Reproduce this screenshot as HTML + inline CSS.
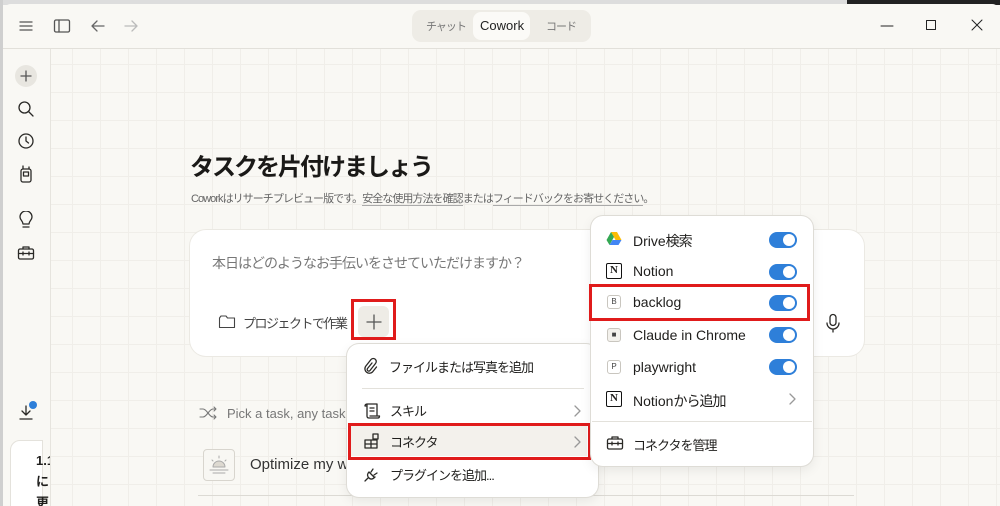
<!DOCTYPE html>
<html><head><meta charset="utf-8"><style>
*{margin:0;padding:0;box-sizing:border-box}
html,body{width:1000px;height:506px;overflow:hidden}
body{position:relative;background:#f9f8f4;font-family:"Liberation Sans","Noto Sans CJK JP",sans-serif;color:#1f1e1c}
.a{position:absolute}
.grid{left:51px;top:49px;right:0;bottom:0;background-image:linear-gradient(#f0eee9 1px,transparent 1px),linear-gradient(90deg,#f0eee9 1px,transparent 1px);background-size:28px 28px;background-position:-7px 15px}
.t{white-space:nowrap}
.j{letter-spacing:-1px}
.tog{width:28px;height:16px;border-radius:8px;background:#2e7fd9}
.tog:after{content:"";position:absolute;right:2px;top:2px;width:12px;height:12px;border-radius:6px;background:#fff}
.red{border:3px solid #e01b1b}
svg{position:absolute;fill:none;stroke:#2a2926;stroke-width:1.3;stroke-linecap:round;stroke-linejoin:round}
.bx{width:14px;height:14px;border:1px solid #c9c6bf;border-radius:3px;font-size:8px;text-align:center;line-height:12px;color:#444;background:#fff}
</style></head><body>
<div class="a" style="left:0;top:0;width:1000px;height:5px;background:#ddd"></div>
<div class="a" style="left:847px;top:0;width:153px;height:5px;background:#222"></div>
<div class="a" style="left:0;top:0;width:3px;height:506px;background:#cfcfcf"></div>
<div class="a" style="left:3px;top:4px;right:0;bottom:0;background:#f9f8f4;border-radius:8px 8px 0 0"></div>
<div class="a" style="left:3px;top:48px;right:0;height:1px;background:#e2e0da"></div>
<div class="a" style="left:50px;top:49px;width:1px;bottom:0;background:#e6e4de"></div>
<div class="a grid"></div>

<svg style="left:18px;top:18px" width="16" height="16"><path d="M2 4h12M2 8h12M2 12h12" stroke="#555"/></svg>
<svg style="left:53px;top:18px" width="18" height="16"><rect x="1.5" y="2" width="15" height="12" rx="1.5" stroke="#555"/><path d="M6 2v12" stroke="#555"/></svg>
<svg style="left:89px;top:18px" width="18" height="16"><path d="M15 8H3M8 3L3 8l5 5" stroke="#666"/></svg>
<svg style="left:122px;top:18px" width="18" height="16"><path d="M3 8h12M10 3l5 5-5 5" stroke="#bbb"/></svg>
<div class="a" style="left:412px;top:10px;width:179px;height:32px;background:#eeece6;border-radius:9px"></div>
<div class="a t j" style="left:426px;top:18px;font-size:11px;color:#777">チャット</div>
<div class="a" style="left:473px;top:12px;width:57px;height:28px;background:#fbfaf7;border-radius:8px"></div>
<div class="a t" style="left:480px;top:18px;font-size:13px;color:#222">Cowork</div>
<div class="a t j" style="left:546px;top:18px;font-size:11px;color:#777">コード</div>
<svg style="left:880px;top:19px" width="14" height="14"><path d="M1 7h12" stroke="#222" stroke-width="1"/></svg>
<svg style="left:924px;top:18px" width="14" height="14"><rect x="2.5" y="2.5" width="9" height="9" stroke="#222" stroke-width="1"/></svg>
<svg style="left:970px;top:18px" width="14" height="14"><path d="M2 2l10 10M12 2L2 12" stroke="#222" stroke-width="1"/></svg>

<div class="a" style="left:15px;top:65px;width:22px;height:22px;border-radius:11px;background:#e8e6e0"></div>
<svg style="left:18px;top:68px" width="16" height="16"><path d="M8 3v10M3 8h10" stroke="#555"/></svg>
<svg style="left:17px;top:100px" width="18" height="18"><circle cx="7.5" cy="7.5" r="5.5"/><path d="M11.5 11.5l4.5 4.5"/></svg>
<svg style="left:17px;top:132px" width="18" height="18"><circle cx="9" cy="9" r="7"/><path d="M9 5v4l2.5 2"/></svg>
<svg style="left:18px;top:164px" width="16" height="20"><rect x="3" y="5" width="10" height="13" rx="2"/><rect x="5.5" y="8" width="5" height="4"/><path d="M5 5V2M11 5V3"/></svg>
<svg style="left:18px;top:211px" width="16" height="20"><path d="M5 13c0-3-3-4-3-7a6 6 0 0 1 12 0c0 3-3 4-3 7z"/><path d="M5 16h6"/></svg>
<svg style="left:17px;top:245px" width="18" height="16"><rect x="1.5" y="4" width="15" height="10" rx="1.5"/><path d="M6 4V2h6v2M1.5 8.5h15M6 7v3M12 7v3"/></svg>
<svg style="left:17px;top:403px" width="18" height="18"><path d="M9 3v9M5 8l4 4 4-4M3 16h12"/></svg>
<div class="a" style="left:29px;top:401px;width:8px;height:8px;border-radius:4px;background:#2e7fd9"></div>
<div class="a" style="left:10px;top:440px;width:33px;height:70px;background:#fff;border-radius:10px 0 0 0;border:1px solid #e4e2dc"></div>
<div class="a" style="left:36px;top:450px;font-size:13px;font-weight:bold;line-height:21px;width:14px;height:56px;overflow:hidden">1.1<br>に<br>更</div>

<div class="a t" style="left:190px;top:147px;font-size:24px;font-weight:bold;color:#1a1917;letter-spacing:-2px">タスクを片付けましょう</div>
<div class="a t" style="left:191px;top:190px;font-size:11px;color:#666;letter-spacing:-0.95px">Coworkはリサーチプレビュー版です。<span style="border-bottom:1px solid #aaa">安全な使用方法を確認</span>または<span style="border-bottom:1px solid #aaa">フィードバックをお寄せください</span>。</div>

<div class="a" style="left:190px;top:230px;width:674px;height:126px;background:#fff;border-radius:16px;box-shadow:0 0 0 1px #ebe9e3"></div>
<div class="a t j" style="left:212px;top:253px;font-size:14px;color:#777">本日はどのようなお手伝いをさせていただけますか？</div>
<svg style="left:218px;top:314px" width="18" height="16"><path d="M1.5 4v9.5h15V4h-7l-1.5-2h-5z" stroke="#444" stroke-width="1.1"/></svg>
<div class="a t" style="left:243px;top:313px;font-size:13px;color:#444;letter-spacing:-1.5px">プロジェクトで作業</div>
<div class="a red" style="left:351px;top:299px;width:45px;height:41px"></div>
<div class="a" style="left:358px;top:306px;width:31px;height:31px;border-radius:6px;background:#eeece6"></div>
<svg style="left:365px;top:313px" width="18" height="18"><path d="M9 2v14M2 9h14" stroke="#555"/></svg>
<svg style="left:825px;top:313px" width="16" height="20"><rect x="5" y="1.5" width="6" height="11" rx="3"/><path d="M2 10a6 6 0 0 0 12 0M8 16v3"/></svg>

<svg style="left:199px;top:406px" width="18" height="14"><path d="M1 3h3c4 0 6 8 10 8h3M1 11h3c4 0 6-8 10-8h3M15 1l2 2-2 2M15 9l2 2-2 2" stroke="#777" stroke-width="1.1"/></svg>
<div class="a t" style="left:227px;top:406px;font-size:13px;color:#777">Pick a task, any task</div>
<div class="a" style="left:203px;top:449px;width:32px;height:32px;border:1px solid #d8d5ce;border-radius:4px;background:#f8f7f3"></div>
<svg style="left:205px;top:452px" width="28" height="26"><path d="M8 15a6 6 0 0 1 12 0z" fill="#ddd9d1" stroke="#aaa" stroke-width="1"/><path d="M5 18h18M8 21h12M14 4v2M7 8l1 1M21 8l-1 1" stroke="#aaa" stroke-width="1"/></svg>
<div class="a t" style="left:250px;top:456px;font-size:15px;color:#333">Optimize my w</div>
<div class="a" style="left:198px;top:495px;width:656px;height:1px;background:#dcdad4"></div>

<div class="a" style="left:347px;top:344px;width:251px;height:153px;background:#fff;border-radius:12px;box-shadow:0 0 0 1px #dedcd6,0 4px 12px rgba(0,0,0,.08)"></div>
<svg style="left:362px;top:357px" width="16" height="18"><path d="M10 6l-4.5 5.5a1.5 1.5 0 0 0 2.5 2l5.5-7a3 3 0 0 0-4.5-4l-5.5 7a4.5 4.5 0 0 0 7 5.5l4-5"/></svg>
<div class="a t j" style="left:389px;top:357px;font-size:13px">ファイルまたは写真を追加</div>
<div class="a" style="left:362px;top:388px;width:222px;height:1px;background:#e3e1db"></div>
<svg style="left:363px;top:402px" width="18" height="18"><path d="M4 2h10v11M4 2c-1.5 0-2 1-2 2h2M4 2v12c0 1.5 1 2 2 2h9c1 0 1.5-1 1.5-2H7M7 6h4M7 9h4"/></svg>
<div class="a t j" style="left:390px;top:401px;font-size:13px">スキル</div>
<svg style="left:572px;top:404px" width="10" height="14"><path d="M3 2l5 5-5 5" stroke="#999"/></svg>
<div class="a" style="left:351px;top:426px;width:236px;height:30px;background:#f3f1ec"></div>
<div class="a red" style="left:348px;top:423px;width:243px;height:37px"></div>
<svg style="left:363px;top:432px" width="18" height="18"><path d="M2 8h6v8H2zM2 12h12v4H8M8 8h6v4M10 2h5v5h-5z"/></svg>
<div class="a t j" style="left:390px;top:432px;font-size:13px">コネクタ</div>
<svg style="left:572px;top:435px" width="10" height="14"><path d="M3 2l5 5-5 5" stroke="#999"/></svg>
<svg style="left:363px;top:465px" width="18" height="18"><path d="M5 13l-3 3M6 7l5 5M10 4l-2 3M14 8l-3 2M6 7c-2 2-2 4 0 6s4 1 6-1"/></svg>
<div class="a t j" style="left:390px;top:465px;font-size:13px">プラグインを追加...</div>

<div class="a" style="left:591px;top:216px;width:222px;height:250px;background:#fff;border-radius:12px;box-shadow:0 0 0 1px #dedcd6,0 4px 12px rgba(0,0,0,.08)"></div>
<svg style="left:606px;top:231px" width="16" height="14"><path d="M5 1h6l4.5 8H9.5z" fill="#fbbc04" stroke="none"/><path d="M5 1L.5 9l3 5 4.5-8z" fill="#34a853" stroke="none"/><path d="M3.5 14h9l3-5h-9z" fill="#4285f4" stroke="none"/></svg>
<div class="a t" style="left:633px;top:231px;font-size:14px">Drive<span class="j">検索</span></div>
<div class="a tog" style="left:769px;top:232px"></div>
<div class="a" style="left:606px;top:263px;width:16px;height:16px;border:1.5px solid #111;border-radius:2px;font-size:11px;font-weight:bold;text-align:center;line-height:13px;font-family:'Liberation Serif',serif">N</div>
<div class="a t" style="left:633px;top:263px;font-size:14px">Notion</div>
<div class="a tog" style="left:769px;top:264px"></div>
<div class="a red" style="left:589px;top:284px;width:221px;height:37px"></div>
<div class="a bx" style="left:607px;top:295px">B</div>
<div class="a t" style="left:633px;top:294px;font-size:14px">backlog</div>
<div class="a tog" style="left:769px;top:295px"></div>
<div class="a bx" style="left:607px;top:328px;background:#f3f1ec">■</div>
<div class="a t" style="left:633px;top:327px;font-size:14px">Claude in Chrome</div>
<div class="a tog" style="left:769px;top:327px"></div>
<div class="a bx" style="left:607px;top:360px">P</div>
<div class="a t" style="left:633px;top:359px;font-size:14px">playwright</div>
<div class="a tog" style="left:769px;top:359px"></div>
<div class="a" style="left:606px;top:391px;width:16px;height:16px;border:1.5px solid #111;border-radius:2px;font-size:11px;font-weight:bold;text-align:center;line-height:13px;font-family:'Liberation Serif',serif">N</div>
<div class="a t" style="left:633px;top:391px;font-size:14px">Notion<span class="j">から追加</span></div>
<svg style="left:787px;top:392px" width="10" height="14"><path d="M3 2l5 5-5 5" stroke="#999"/></svg>
<div class="a" style="left:592px;top:421px;width:220px;height:1px;background:#e3e1db"></div>
<svg style="left:606px;top:435px" width="18" height="16"><rect x="1.5" y="4" width="15" height="10" rx="1.5"/><path d="M6 4V2h6v2M1.5 8.5h15M6 7v3M12 7v3"/></svg>
<div class="a t j" style="left:633px;top:435px;font-size:13px">コネクタを管理</div>
</body></html>
